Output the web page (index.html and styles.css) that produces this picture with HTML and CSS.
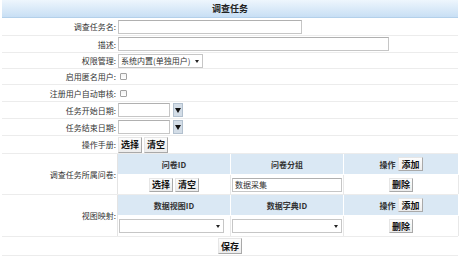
FILE: index.html
```html
<!DOCTYPE html>
<html>
<head>
	<meta charset="utf-8">
	<title>调查任务</title>
	<link rel="stylesheet" href="styles.css">
</head>
<body>
	<form class="task">
		<div class="title">调查任务</div>

		<div class="row h18">
			<label class="label">调查任务名:</label>
			<div class="field"><input class="text name" type="text"></div>
		</div>
		<div class="row h17">
			<label class="label">描述:</label>
			<div class="field"><input class="text desc" type="text"></div>
		</div>
		<div class="row h16">
			<label class="label">权限管理:</label>
			<div class="field">
				<span class="select perm"><select><option>系统内置(单独用户)</option></select></span>
			</div>
		</div>
		<div class="row h16">
			<label class="label">启用匿名用户:</label>
			<div class="field"><input class="check" type="checkbox"></div>
		</div>
		<div class="row h17">
			<label class="label">注册用户自动审核:</label>
			<div class="field"><input class="check" type="checkbox"></div>
		</div>
		<div class="row h17">
			<label class="label">任务开始日期:</label>
			<div class="field date"><input class="text day" type="text"><span class="picker"></span></div>
		</div>
		<div class="row h17">
			<label class="label">任务结束日期:</label>
			<div class="field date"><input class="text day" type="text"><span class="picker"></span></div>
		</div>
		<div class="row h18">
			<label class="label">操作手册:</label>
			<div class="field"><button class="btn" type="button">选择</button><button class="btn" type="button">清空</button></div>
		</div>

		<div class="row h41">
			<label class="label">调查任务所属问卷:</label>
			<div class="sub">
				<div class="head">问卷ID</div>
				<div class="head">问卷分组</div>
				<div class="head">操作 <button class="btn small" type="button">添加</button></div>
				<div class="cell"><button class="btn small" type="button">选择</button><button class="btn small" type="button">清空</button></div>
				<div class="cell"><input class="text group" type="text" value="数据采集"></div>
				<div class="cell"><button class="btn small" type="button">删除</button></div>
			</div>
		</div>

		<div class="row h42">
			<label class="label">视图映射:</label>
			<div class="sub">
				<div class="head">数据视图ID</div>
				<div class="head">数据字典ID</div>
				<div class="head">操作 <button class="btn small" type="button">添加</button></div>
				<div class="cell left"><span class="select view"><select><option></option></select></span></div>
				<div class="cell left"><span class="select dict"><select><option></option></select></span></div>
				<div class="cell"><button class="btn small" type="button">删除</button></div>
			</div>
		</div>

		<div class="row save h19">
			<button class="btn" type="submit">保存</button>
		</div>
	</form>
</body>
</html>
```

FILE: styles.css
```css
body { margin: 0; background: #fff; color: #333; font-family: "Noto Sans CJK SC", "Noto Sans", sans-serif; font-size: 8px; }

.task { width: 456px; margin-left: 2px; }

.title {
	height: 17px; line-height: 17px;
	border-bottom: 1px solid #b3d0ea;
	background: linear-gradient(#eef6fd, #c8dff4);
	text-align: center; font-weight: bold; font-size: 9px; color: #222;
}

.row { display: grid; grid-template-columns: 115px 1fr; align-items: center; box-sizing: border-box; border-bottom: 1px solid #ececec; }
.h16 { height: 16px; }
.h17 { height: 17px; }
.h18 { height: 18px; }
.h19 { height: 19px; }
.h41 { height: 41px; }
.h42 { height: 42px; }

.label { text-align: right; padding-right: 1px; white-space: nowrap; }
.field { display: flex; align-items: center; gap: 2px; padding-left: 1px; }

.text {
	box-sizing: border-box; height: 14px; margin: 0; padding: 0 2px;
	border: 1px solid #c6c6c6; border-top-color: #b0b0b0;
	font: inherit; color: #333; background: #fff;
}
.name { width: 184px; }
.desc { width: 271px; }
.day { width: 52px; }
.group { width: 110px; }

.select { position: relative; display: inline-block; }
.select select {
	-webkit-appearance: none; appearance: none;
	box-sizing: border-box; height: 14px; margin: 0; padding: 0 10px 0 2px;
	border: 1px solid #c6c6c6; border-radius: 0; background: #fff;
	font: inherit; color: #333; display: block;
}
.select::after {
	content: ""; position: absolute; right: 4px; top: 6px;
	border-top: 3px solid #222; border-left: 2px solid transparent; border-right: 2px solid transparent;
}
.perm select { width: 85px; }
.view select { width: 105px; }
.dict select { width: 110px; }

.check {
	-webkit-appearance: none; appearance: none;
	width: 7px; height: 7px; margin: 0 0 0 2px;
	border: 1px solid #a2a2a2; border-radius: 1px;
	background: linear-gradient(#f2f2f2, #fff);
}

.date { gap: 3px; }
.picker {
	position: relative; box-sizing: border-box; width: 10px; height: 14px;
	border: 1px solid #b2c0ce; background: #d3dde7;
}
.picker::after {
	content: ""; position: absolute; left: 1px; top: 4px;
	border-top: 5px solid #111; border-left: 3px solid transparent; border-right: 3px solid transparent;
}

.btn {
	box-sizing: border-box; height: 16px; margin: 0; padding: 0 2px;
	border: 1px solid; border-color: #e6e6e6 #a9a9a9 #a9a9a9 #e6e6e6;
	background: linear-gradient(#fdfdfd, #ececec);
	font-family: "Noto Sans CJK SC", sans-serif; font-size: 9px; font-weight: bold; line-height: 13px; color: #111;
}
.btn.small { height: 14px; line-height: 11px; }

.sub {
	display: grid; height: 100%;
	grid-template-columns: 113px 113px 115px; grid-template-rows: 21px 1fr;
	border-left: 1px solid #e4e4e4; box-sizing: border-box;
}
.head {
	display: flex; align-items: center; justify-content: center; gap: 3px;
	background: #dae8f4; border-right: 1px solid #fff; border-bottom: 1px solid #fff;
	font-weight: bold; color: #333;
}
.cell { display: flex; align-items: center; justify-content: center; gap: 2px; border-right: 1px solid #e8e8e8; }
.cell.left { justify-content: flex-start; padding-left: 1px; }

.save { display: flex; justify-content: center; }
```
